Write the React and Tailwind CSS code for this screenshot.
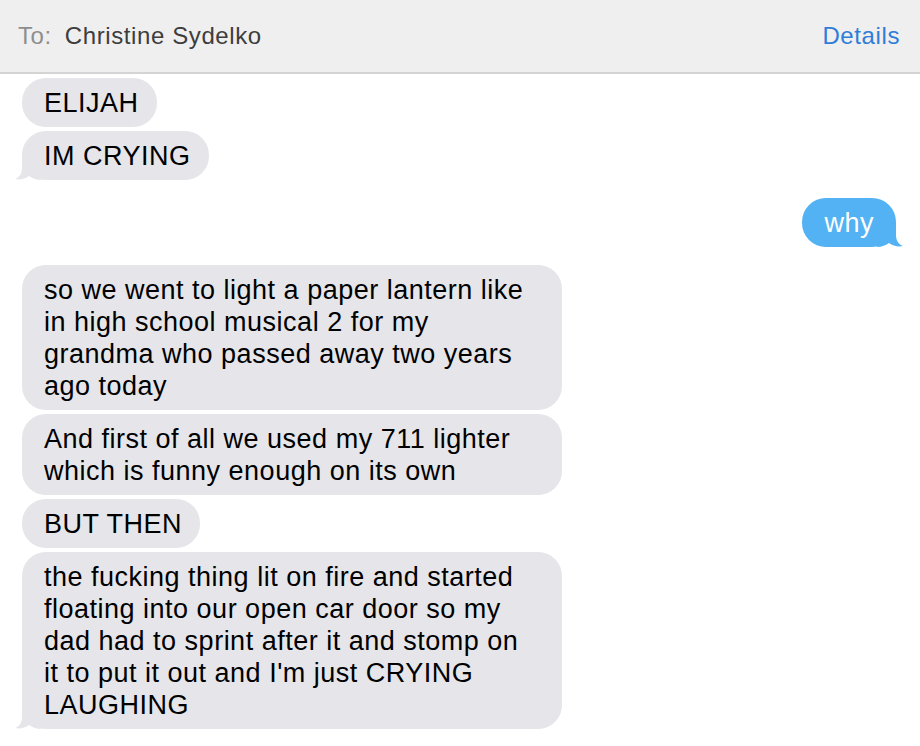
const FONT = { fontFamily: '"Liberation Sans", Arial, sans-serif' };

const messages = [
    { id: 1, from: 'them', lines: ['ELIJAH'] },
    { id: 2, from: 'them', lines: ['IM CRYING'], tail: true },
    { id: 3, from: 'me', lines: ['why'], tail: true },
    {
        id: 4, from: 'them', wide: true, lines: [
            'so we went to light a paper lantern like',
            'in high school musical 2 for my',
            'grandma who passed away two years',
            'ago today',
        ],
    },
    {
        id: 5, from: 'them', wide: true, lines: [
            'And first of all we used my 711 lighter',
            'which is funny enough on its own',
        ],
    },
    { id: 6, from: 'them', lines: ['BUT THEN'] },
    {
        id: 7, from: 'them', wide: true, tail: true, lines: [
            'the fucking thing lit on fire and started',
            'floating into our open car door so my',
            'dad had to sprint after it and stomp on',
            "it to put it out and I'm just CRYING",
            'LAUGHING',
        ],
    },
];

const Tail = ({ mine }) => (
    <svg
        width="26" height="24" viewBox="0 0 26 24"
        className={`absolute bottom-0 ${mine ? 'right-[-7px] -scale-x-100' : 'left-[-7px]'}`}
    >
        <path
            d="M7 0 L7 12 C7 17 5 21 0 23 C5 24 10 23 14 20 C17 22 21 24 26 24 L26 0 Z"
            fill={mine ? '#53b2f3' : '#e5e5ea'}
        />
    </svg>
);

const Bubble = ({ m }) => {
    const mine = m.from === 'me';
    return (
        <div className={`flex ${mine ? 'justify-end' : 'justify-start'}`}>
            <div
                className={`relative rounded-[24px] pl-[22px] pt-[9px] pb-[8px] text-[27px] leading-[32px] tracking-[0.5px] ${
                    mine ? 'bg-[#53b2f3] text-white pr-[22px]' : 'bg-[#e5e5ea] text-black pr-[18px]'
                } ${m.wide ? 'w-[540px]' : ''}`}
            >
                {m.tail && <Tail mine={mine} />}
                <div className="relative whitespace-nowrap">
                    {m.lines.map((l, i) => <div key={i}>{l}</div>)}
                </div>
            </div>
        </div>
    );
};

export default function App() {
    // group consecutive messages by sender
    const groups = [];
    messages.forEach((m) => {
        const last = groups[groups.length - 1];
        if (last && last[0].from === m.from) last.push(m);
        else groups.push([m]);
    });

    return (
        <div className="w-[920px] h-[746px] bg-white overflow-hidden" style={FONT}>
            {/* Header */}
            <div className="h-[74px] bg-[#efefef] border-b-2 border-[#d4d4d4] flex items-center px-[18px] text-[24px] tracking-[0.6px]">
                <span className="text-[#8e8e8e]">To:</span>
                <span className="ml-[13px] text-[#3d3d3d]">Christine Sydelko</span>
                <span className="ml-auto mr-[2px] text-[#2f7dd9]">Details</span>
            </div>

            {/* Thread */}
            <div className="pt-[4px] pl-[22px] pr-[24px] flex flex-col gap-[18px]">
                {groups.map((g, gi) => (
                    <div key={gi} className="flex flex-col gap-[4px]">
                        {g.map((m) => <Bubble key={m.id} m={m} />)}
                    </div>
                ))}
            </div>
        </div>
    );
}
